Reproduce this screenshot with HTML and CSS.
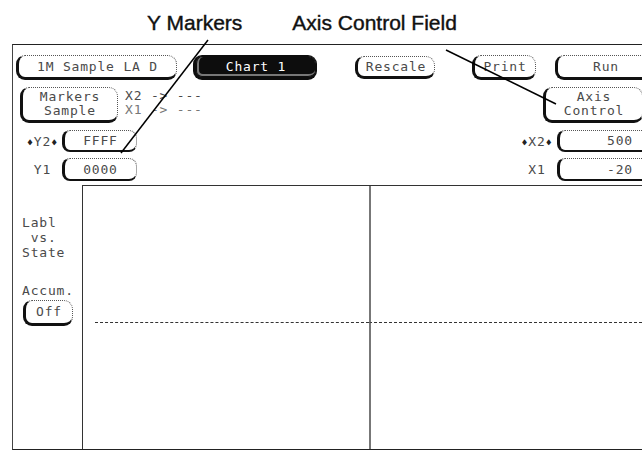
FILE: index.html
```html
<!DOCTYPE html>
<html lang="en">
  <head>
    <meta charset="UTF-8" />
    <meta name="viewport" content="width=device-width, initial-scale=1.0" />
    <title>Chart Display</title>
    <link rel="stylesheet" href="styles.css">
  </head>
  <body>
    <div class="captions">
      <span>Y Markers</span>
      <span>Axis Control Field</span>
    </div>
    <div class="panel">
      <div class="row-top">
        <div class="key key-source">1M Sample LA D</div>
        <div class="key key-chart">Chart 1</div>
        <div class="key key-rescale">Rescale</div>
        <div class="key key-print">Print</div>
        <div class="key key-run">Run</div>
      </div>
      <div class="row-markers">
        <div class="key key-markers">Markers<br>Sample</div>
        <div class="xlist">
          <div>X2 -&gt; ---</div>
          <div class="dim">X1 -&gt; ---</div>
        </div>
        <div class="key key-axis">Axis<br>Control</div>
      </div>
      <div class="row-field">
        <span class="label"><span class="dia">&#9830;</span>Y2<span class="dia">&#9830;</span></span>
        <div class="field">FFFF</div>
        <span></span>
        <span class="label"><span class="dia">&#9830;</span>X2<span class="dia">&#9830;</span></span>
        <div class="field field-num">500</div>
      </div>
      <div class="row-field row-low">
        <span class="label">Y1</span>
        <div class="field">0000</div>
        <span></span>
        <span class="label">X1</span>
        <div class="field field-num">-20</div>
      </div>
      <div class="chart-area">
        <div class="sidebar">
          <div>Labl</div>
          <div>&nbsp;vs.</div>
          <div>State</div>
          <div class="accum">Accum.</div>
          <div class="key key-off">Off</div>
        </div>
        <div class="plot">
          <div class="cell cell-tl"></div>
          <div class="cell cell-tr"></div>
          <div class="cell"></div>
          <div class="cell cell-br"></div>
        </div>
      </div>
    </div>
    <!-- leader lines from the captions -->
    <svg class="leaders" width="642" height="458">
      <line x1="208" y1="40" x2="121" y2="153" />
      <line x1="446" y1="50" x2="556" y2="104" />
    </svg>
  </body>
</html>
```

FILE: styles.css
```css
body {
  margin: 0;
  width: 642px;
  height: 458px;
  overflow: hidden;
  position: relative;
  background: #fff;
  font-family: "DejaVu Sans Mono", monospace;
  font-size: 13px;
  letter-spacing: 0.8px;
  color: #4a4a4a;
}
.captions {
  height: 44px;
  box-sizing: border-box;
  padding: 12px 0 0 147px;
  display: flex;
  gap: 50px;
  font-family: "Liberation Sans", Arial, sans-serif;
  font-size: 21px;
  line-height: 21px;
  letter-spacing: 0;
  color: #111;
  -webkit-text-stroke: 0.4px #111;
}
.panel {
  margin-left: 12px;
  width: 660px;
  height: 406px;
  box-sizing: border-box;
  border-left: 1px solid #444;
  border-top: 1px solid #222;
  border-bottom: 1px solid #222;
  display: flex;
  flex-direction: column;
}
.key {
  box-sizing: border-box;
  display: flex;
  align-items: center;
  justify-content: center;
  text-align: center;
  line-height: 14px;
  border: 1px dotted #555;
  border-left: 3px solid #111;
  border-bottom: 3px solid #111;
  border-radius: 9px;
}
.row-top {
  display: flex;
  flex-shrink: 0;
  height: 25px;
  margin-top: 10px;
}
.key-source {
  margin-left: 3px;
  width: 161px;
}
.key-chart {
  margin-left: 16px;
  width: 124px;
  background: #0d0d0d;
  color: #fff;
  border-color: #0d0d0d;
  box-shadow: inset 0 0 0 1px #0d0d0d, inset 1px -1px 0 2px #777;
}
.key-rescale {
  margin-left: 38px;
  width: 80px;
  height: 23px;
  align-self: center;
}
.key-print {
  margin-left: 37px;
  width: 64px;
}
.key-run {
  margin-left: 19px;
  width: 100px;
}
.row-markers {
  display: flex;
  flex-shrink: 0;
  height: 36px;
  margin-top: 7px;
}
.key-markers {
  margin-left: 7px;
  width: 98px;
}
.xlist {
  margin-left: 7px;
  width: 100px;
  padding-top: 2px;
  line-height: 14px;
  white-space: nowrap;
}
.dim {
  color: #777;
}
.key-axis {
  margin-left: 318px;
  width: 100px;
}
.row-field {
  display: grid;
  flex-shrink: 0;
  grid-template-columns: 49px 75px 380px 40px 105px;
  align-items: center;
  height: 22px;
  margin-top: 7px;
}
.row-low {
  height: 23px;
  margin-top: 6px;
}
.label {
  text-align: center;
  white-space: nowrap;
}
.row-field .label:first-child {
  padding-left: 10px;
}
.dia {
  font-size: 10px;
  color: #222;
}
.field {
  height: 100%;
  box-sizing: border-box;
  display: flex;
  align-items: center;
  justify-content: center;
  border: 1px dotted #555;
  border-left: 3px solid #111;
  border-bottom: 2px solid #111;
  border-radius: 8px;
}
.field-num {
  justify-content: flex-end;
  padding-right: 28px;
}
.chart-area {
  flex: 1;
  min-height: 0;
  display: flex;
  margin-top: 4px;
}
.sidebar {
  width: 69px;
  flex-shrink: 0;
  box-sizing: border-box;
  padding: 30px 0 0 9px;
  line-height: 15px;
}
.accum {
  margin-top: 23px;
}
.key-off {
  margin: 2px 0 0 1px;
  width: 50px;
  height: 26px;
}
.plot {
  flex: 1;
  display: grid;
  grid-template-columns: 286px 1fr;
  grid-template-rows: 137px 1fr;
  border-left: 1px solid #333;
  border-top: 1px solid #333;
}
.cell {
  box-sizing: border-box;
}
.cell-tl {
  margin-left: 12px;
  border-bottom: 1px dashed #333;
}
.cell-tr {
  border-bottom: 1px dashed #333;
  border-left: 2px solid #777;
}
.cell-br {
  border-left: 2px solid #777;
}
.leaders {
  position: absolute;
  left: 0;
  top: 0;
  pointer-events: none;
}
.leaders line {
  stroke: #000;
  stroke-width: 1.5;
}
```
